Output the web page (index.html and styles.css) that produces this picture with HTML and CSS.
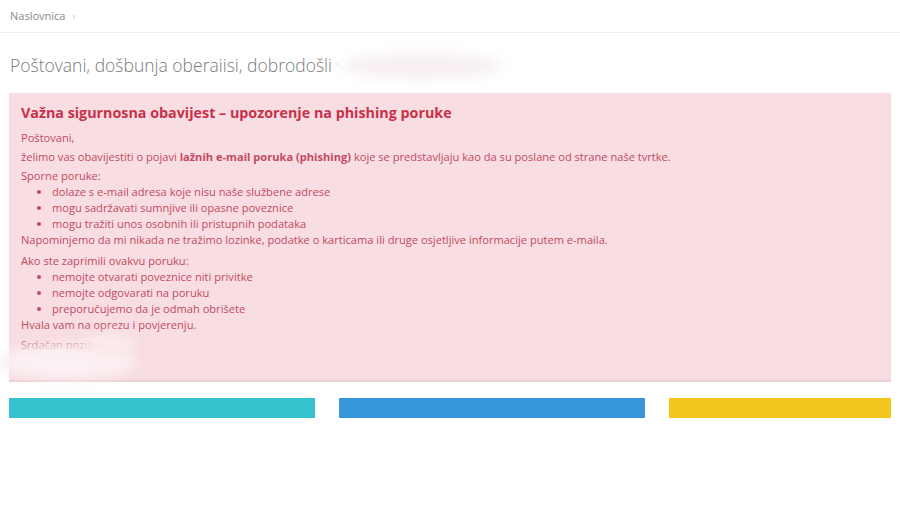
FILE: index.html
```html
<!DOCTYPE html>
<html lang="hr">
<head>
    <meta charset="UTF-8">
    <meta name="viewport" content="width=device-width, initial-scale=1.0">
    <title>Naslovnica</title>
    <link rel="stylesheet" href="styles.css">
</head>
<body>
    <div class="breadcrumb">
        <span>Naslovnica</span>
        <span class="crumb-sep">›</span>
    </div>

    <h1 class="page-title">
        Poštovani, došbunja oberaiisi, dobrodošli <span class="tick">'</span>
        <span class="smudge smudge-title"></span>
    </h1>

    <div class="notice">
        <h2>Važna sigurnosna obavijest – upozorenje na phishing poruke</h2>
        <p>Poštovani,</p>
        <p>želimo vas obavijestiti o pojavi <b>lažnih e-mail poruka (phishing)</b> koje se predstavljaju kao da su poslane od strane naše tvrtke.</p>
        <p class="tight">Sporne poruke:</p>
        <ul>
            <li>dolaze s e-mail adresa koje nisu naše službene adrese</li>
            <li>mogu sadržavati sumnjive ili opasne poveznice</li>
            <li>mogu tražiti unos osobnih ili pristupnih podataka</li>
        </ul>
        <p class="wide">Napominjemo da mi nikada ne tražimo lozinke, podatke o karticama ili druge osjetljive informacije putem e-maila.</p>
        <p class="tight">Ako ste zaprimili ovakvu poruku:</p>
        <ul>
            <li>nemojte otvarati poveznice niti privitke</li>
            <li>nemojte odgovarati na poruku</li>
            <li>preporučujemo da je odmah obrišete</li>
        </ul>
        <p>Hvala vam na oprezu i povjerenju.</p>
        <p class="signoff">Srdačan pozdrav,</p>
        <span class="smudge smudge-sign"></span>
        <span class="smudge smudge-sign2"></span>
    </div>

    <div class="tiles">
        <div class="tile tile-cyan"></div>
        <div class="tile tile-blue"></div>
        <div class="tile tile-yellow"></div>
    </div>
</body>
</html>
```

FILE: styles.css
```css
body {
    font-family: "Open Sans", Arial, sans-serif;
    margin: 0;
    padding: 0 9px;
    background: #fff;
    color: #555;
}
.breadcrumb {
    font-size: 11px;
    color: #8a8a8a;
    padding: 8px 0 9px 10px;
    border-bottom: 1px solid #efefef;
    margin: 0 -9px;
}
.crumb-sep {
    color: #cfcfcf;
    margin-left: 4px;
}
.page-title {
    position: relative;
    font-size: 17.5px;
    font-weight: 300;
    color: #7a7a7a;
    margin: 20px 0 16px 1px;
}
.tick {
    color: #bbb;
    font-size: 12px;
}
.smudge {
    position: absolute;
    border-radius: 50%;
    filter: blur(6px);
}
.smudge-title {
    left: 332px;
    top: 0;
    width: 160px;
    height: 26px;
    background: #f7eff1;
}
.notice {
    position: relative;
    background: #f8dde2;
    border-bottom: 2px solid #e8d2d6;
    padding: 12px 12px 24px;
    font-size: 11.1px;
    line-height: 16px;
    color: #c24a5e;
}
.notice h2 {
    font-size: 14.3px;
    font-weight: 700;
    color: #c9304a;
    margin: 0 0 9px;
}
.notice p {
    margin: 0 0 3px;
}
.notice p.tight {
    margin-bottom: 0;
}
.notice p.wide {
    margin-bottom: 5px;
}
.notice b {
    font-weight: 700;
}
.notice ul {
    margin: 0;
    padding-left: 31px;
}
.notice p.signoff {
    margin-top: 4px;
    color: #cc7587;
}
.smudge-sign {
    left: -12px;
    top: 252px;
    width: 140px;
    height: 34px;
    background: #fbf0f2;
}
.smudge-sign2 {
    left: 72px;
    top: 240px;
    width: 56px;
    height: 22px;
    background: #faeaed;
}
.tiles {
    display: grid;
    grid-template-columns: 306px 306px 1fr;
    gap: 24px;
    margin-top: 16px;
}
.tile {
    height: 20px;
}
.tile-cyan {
    background: #36c3cf;
}
.tile-blue {
    background: #3896db;
}
.tile-yellow {
    background: #f4c51c;
}
```
